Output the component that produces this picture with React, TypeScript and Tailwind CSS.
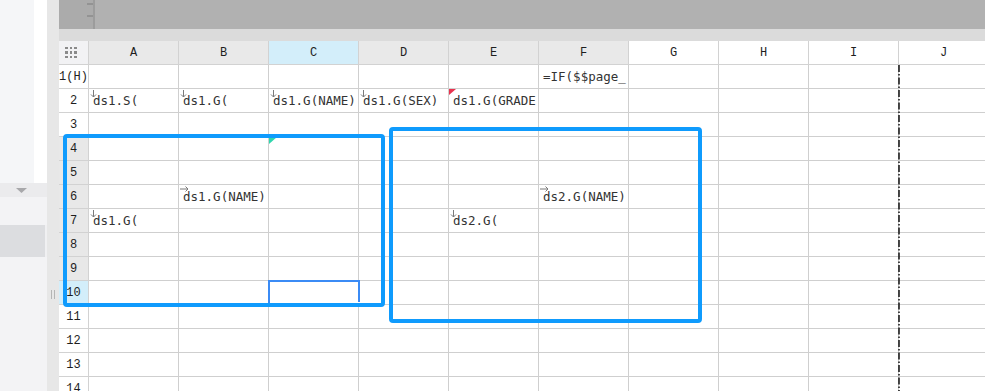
import React from 'react';

const COLS = ['A', 'B', 'C', 'D', 'E', 'F', 'G', 'H', 'I', 'J'];
const ROWS = [1, 2, 3, 4, 5, 6, 7, 8, 9, 10, 11, 12, 13, 14];

type Cell = { text?: string; arrow?: 'down' | 'right'; mark?: 'red' | 'green' };

const cells: Record<string, Cell> = {
  F1: { text: '=IF($$page_' },
  A2: { text: 'ds1.S(', arrow: 'down' },
  B2: { text: 'ds1.G(', arrow: 'down' },
  C2: { text: 'ds1.G(NAME)', arrow: 'down' },
  D2: { text: 'ds1.G(SEX)', arrow: 'down' },
  E2: { text: 'ds1.G(GRADE', mark: 'red' },
  C4: { mark: 'green' },
  B6: { text: 'ds1.G(NAME)', arrow: 'right' },
  F6: { text: 'ds2.G(NAME)', arrow: 'right' },
  A7: { text: 'ds1.G(', arrow: 'down' },
  E7: { text: 'ds2.G(', arrow: 'down' },
};

const colHeaderBg = (c: string) => {
  if (c === 'C') return 'bg-[#d3eefa]';
  if (['A', 'B', 'D', 'E', 'F'].includes(c)) return 'bg-[#e9e9e9]';
  return 'bg-white';
};

const rowHeaderBg = (r: number) => {
  if (r === 10) return 'bg-[#d3eefa]';
  if (r >= 4 && r <= 9) return 'bg-[#e8e8e8]';
  return 'bg-white';
};

function DownArrow() {
  return (
    <svg className="absolute left-[1px] top-[1px]" width="7" height="8" viewBox="0 0 7 8">
      <path d="M3.5 0 V7 M1 4.5 L3.5 7 L6 4.5" stroke="#7a7a7a" strokeWidth="1" fill="none" />
    </svg>
  );
}

function RightArrow() {
  return (
    <svg className="absolute left-[1px] top-[1px]" width="9" height="6" viewBox="0 0 9 6">
      <path d="M0 3 H8 M5.5 0.5 L8 3 L5.5 5.5" stroke="#7a7a7a" strokeWidth="1" fill="none" />
    </svg>
  );
}

export default function App() {
  return (
    <div className="w-[985px] h-[391px] overflow-hidden flex bg-white" style={{ fontFamily: '"DejaVu Sans Mono", monospace' }}>
      {/* left sidebar */}
      <div className="w-[47px] h-full flex flex-col shrink-0">
        <div className="h-[183px] flex">
          <div className="w-[34px] bg-[#f5f6f8]" />
          <div className="flex-1 bg-white" />
        </div>
        <div className="h-[14px] bg-[#ebebed] flex items-center pl-[16px]">
          <svg width="11" height="5" viewBox="0 0 11 5">
            <path d="M0 0 H11 L5.5 5 Z" fill="#a8a8ab" />
          </svg>
        </div>
        <div className="h-[28px] bg-[#f3f3f5]" />
        <div className="h-[32px] flex">
          <div className="w-[45px] bg-[#dcdde0]" />
          <div className="flex-1 bg-[#f0f0f2]" />
        </div>
        <div className="flex-1 bg-[#f3f3f5]" />
      </div>

      {/* splitter strip */}
      <div className="w-[12px] h-full bg-[#e7e7e7] shrink-0 flex flex-col items-center">
        <div className="mt-[290px] flex gap-[2px]">
          <div className="w-[1px] h-[9px] bg-[#b5b5b5]" />
          <div className="w-[1px] h-[9px] bg-[#b5b5b5]" />
        </div>
      </div>

      {/* main */}
      <div className="flex-1 flex flex-col min-w-0">
        <div className="h-[29px] flex bg-[#b1b1b1] shrink-0">
          <div className="w-[36px] bg-[#ababab] relative border-r-2 border-[#9c9c9c]">
            <div className="absolute right-0 top-[3px] w-[6px] h-[2px] bg-[#939393]" />
            <div className="absolute right-0 top-[15px] w-[6px] h-[2px] bg-[#939393]" />
          </div>
          <div className="flex-1" />
        </div>
        <div className="h-[12px] bg-[#dbdbdb] shrink-0" />

        <div className="relative flex-1 overflow-hidden">
          <div className="grid grid-cols-[30px_repeat(10,90px)] auto-rows-[24px] w-max">
            {/* header row */}
            <div className="bg-[#f2f2f4] border-r border-b border-[#d2d2d2] flex items-center pl-[6px]">
              <div className="grid grid-cols-3 gap-[2px]">
                {Array.from({ length: 9 }).map((_, i) => (
                  <div key={i} className="w-[2.5px] h-[2.5px] bg-[#8a8a8a]" />
                ))}
              </div>
            </div>
            {COLS.map((c) => (
              <div
                key={c}
                className={`${colHeaderBg(c)} border-r border-b border-[#d2d2d2] flex items-center justify-center text-[12px] text-[#1e1e1e]`}
                style={{ fontFamily: '"Liberation Mono", monospace' }}
              >
                {c}
              </div>
            ))}

            {ROWS.map((r) => (
              <React.Fragment key={r}>
                <div
                  className={`${rowHeaderBg(r)} border-r border-b border-[#d2d2d2] flex items-center justify-center text-[12px] text-[#1e1e1e]`}
                  style={{ fontFamily: '"Liberation Mono", monospace' }}
                >
                  {r === 1 ? '1(H)' : r}
                </div>
                {COLS.map((c) => {
                  const cell = cells[`${c}${r}`];
                  return (
                    <div
                      key={c}
                      className="relative border-r border-b border-[#cfcfcf] flex items-center pl-[4px] pt-[2px] overflow-hidden whitespace-nowrap text-[12.5px] text-[#333] leading-none"
                    >
                      {cell?.arrow === 'down' && <DownArrow />}
                      {cell?.arrow === 'right' && <RightArrow />}
                      {cell?.mark === 'red' && (
                        <svg className="absolute left-0 top-0" width="7" height="6" viewBox="0 0 7 6">
                          <path d="M0 0 H7 L0 6 Z" fill="#e8334f" />
                        </svg>
                      )}
                      {cell?.mark === 'green' && (
                        <svg className="absolute left-0 top-0" width="8" height="7" viewBox="0 0 8 7">
                          <path d="M0 0 H8 L0 7 Z" fill="#2fd6ad" />
                        </svg>
                      )}
                      {cell?.text}
                    </div>
                  );
                })}
              </React.Fragment>
            ))}
          </div>

          {/* page break dashed line */}
          <svg className="absolute left-[839px] top-[24px]" width="2" height="340">
            <line x1="1" y1="0" x2="1" y2="340" stroke="#111" strokeWidth="1.5" strokeDasharray="7 2 1.5 2" />
          </svg>

          {/* selected cell C10 */}
          <div className="absolute left-[209px] top-[239px] w-[92px] h-[25px] border-2 border-[#3b8bf5]">
            <div className="absolute -right-[3px] -bottom-[3px] w-[4px] h-[4px] bg-[#3b8bf5] border border-white" />
          </div>

          {/* block boxes */}
          <div className="absolute left-[4px] top-[93px] w-[322px] h-[173px] border-[4px] border-[#0f9bfd] rounded-[4px]" />
          <div className="absolute left-[330px] top-[86px] w-[313px] h-[196px] border-[4px] border-[#0f9bfd] rounded-[4px]" />
        </div>
      </div>
    </div>
  );
}
